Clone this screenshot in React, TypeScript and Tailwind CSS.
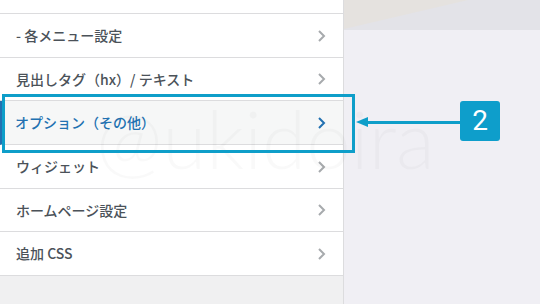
const sections = [
  { label: '- 各メニュー設定', h: 'h-[44px]' },
  { label: '見出しタグ（hx）/ テキスト', h: 'h-[43px]' },
  { label: 'オプション（その他）', h: 'h-[44px]', active: true },
  { label: 'ウィジェット', h: 'h-[44px]' },
  { label: 'ホームページ設定', h: 'h-[43px]' },
  { label: '追加 CSS', h: 'h-[44px]' },
]

function Chevron({ active }: { active?: boolean }) {
  return (
    <svg width="9" height="14" viewBox="0 0 9 14" className="shrink-0">
      <polyline
        points="2,2 7,7 2,12"
        fill="none"
        stroke={active ? '#2271b1' : '#a7aaad'}
        strokeWidth="2"
      />
    </svg>
  )
}

export default function App() {
  return (
    <div
      className="relative flex w-[540px] h-[304px] overflow-hidden"
      style={{ fontFamily: '"Noto Sans CJK JP", "Noto Sans", sans-serif' }}
    >
      <div className="w-[344px] shrink-0 flex flex-col bg-[#f0f0f1] border-r border-[#dcdcde]">
        <div className="h-[14px] bg-white border-b border-[#dcdcde]" />
        {sections.map((s) => (
          <div
            key={s.label}
            className={`${s.h} flex items-center justify-between pr-[17px] border-b border-[#dcdcde] text-[14px] font-medium ${
              s.active
                ? 'bg-[#f6f7f7] text-[#2271b1] border-l-[3px] border-l-[#2271b1] pl-[12px]'
                : 'bg-white text-[#4b5259] pl-[16px]'
            }`}
          >
            <span>{s.label}</span>
            <Chevron active={s.active} />
          </div>
        ))}
      </div>

      <div className="flex-1 flex flex-col bg-[#f0eff4]">
        <div className="h-[30px] bg-[#e3e3e8]">
          <svg width="196" height="30" viewBox="0 0 196 30">
            <polygon points="0,0 124,0 0,29" fill="#e5e2df" />
          </svg>
        </div>
      </div>

      {/* watermark */}
      <div
        className="absolute left-[96px] top-[98px] text-[80px] leading-none font-light text-black/[0.022] pointer-events-none"
        style={{ fontFamily: 'Lato, sans-serif' }}
      >
        @ukidoira
      </div>

      <div className="absolute left-[2px] top-[94px] w-[353px] h-[59px] border-[3px] border-[#0e9ec9]" />

      <div className="absolute left-[356px] top-[117px] flex items-center">
        <div className="w-0 h-0 border-y-[5.5px] border-y-transparent border-r-[12px] border-r-[#0e9ec9]" />
        <div className="w-[92px] h-[3px] bg-[#0e9ec9]" />
      </div>

      <div
        className="absolute left-[460px] top-[101px] w-[40px] h-[40px] rounded-[3px] bg-[#0e9ecb] flex items-center justify-center text-white text-[28px] leading-none"
        style={{ fontFamily: 'Roboto, sans-serif' }}
      >
        2
      </div>
    </div>
  )
}
